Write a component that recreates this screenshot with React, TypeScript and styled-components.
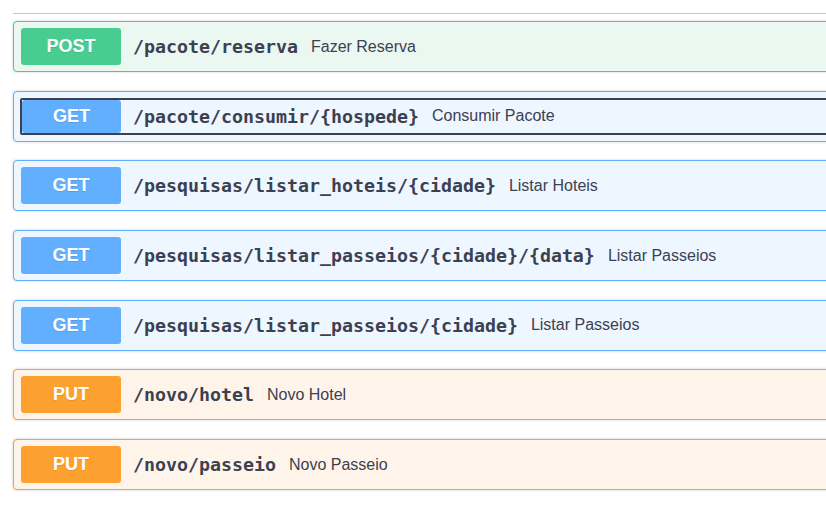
import styled, { createGlobalStyle } from "styled-components";

type Method = "post" | "get" | "put";

const colors: Record<Method, { main: string; bg: string }> = {
  post: { main: "#49cc90", bg: "#ebf7f1" },
  get: { main: "#61affe", bg: "#eef6ff" },
  put: { main: "#fca130", bg: "#fff4ea" },
};

const operations: {
  method: Method;
  path: string;
  summary: string;
  focused?: boolean;
}[] = [
  { method: "post", path: "/pacote/reserva", summary: "Fazer Reserva" },
  {
    method: "get",
    path: "/pacote/consumir/{hospede}",
    summary: "Consumir Pacote",
    focused: true,
  },
  {
    method: "get",
    path: "/pesquisas/listar_hoteis/{cidade}",
    summary: "Listar Hoteis",
  },
  {
    method: "get",
    path: "/pesquisas/listar_passeios/{cidade}/{data}",
    summary: "Listar Passeios",
  },
  {
    method: "get",
    path: "/pesquisas/listar_passeios/{cidade}",
    summary: "Listar Passeios",
  },
  { method: "put", path: "/novo/hotel", summary: "Novo Hotel" },
  { method: "put", path: "/novo/passeio", summary: "Novo Passeio" },
];

function App() {
  return (
    <>
      <GlobalStyle />
      <Page>
        <TagSection>
          <Divider />
          {operations.map((op) => (
            <OpBlock key={op.method + op.path} $method={op.method}>
              <SummaryControl $focused={op.focused}>
                <MethodBadge $method={op.method} $focused={op.focused}>
                  {op.method.toUpperCase()}
                </MethodBadge>
                <PathText>{op.path}</PathText>
                <Description>{op.summary}</Description>
              </SummaryControl>
            </OpBlock>
          ))}
        </TagSection>
      </Page>
    </>
  );
}

export default App;

const GlobalStyle = createGlobalStyle`
  html, body {
    margin: 0;
    padding: 0;
    background: #ffffff;
    overflow: hidden;
  }
`;

const Page = styled.div`
  width: 826px;
  height: 516px;
  overflow: hidden;
  padding: 13px 0 0 13px;
  box-sizing: border-box;
`;

const TagSection = styled.div`
  width: 900px;
  display: flex;
  flex-direction: column;
`;

const Divider = styled.div`
  height: 1px;
  background: rgba(59, 65, 81, 0.3);
  margin-bottom: 7px;
`;

const OpBlock = styled.div<{ $method: Method }>`
  border: 1px solid ${(p) => colors[p.$method].main};
  background: ${(p) => colors[p.$method].bg};
  border-radius: 4px;
  box-shadow: 0 0 3px rgba(0, 0, 0, 0.19);
  padding: 6px 6px;
  margin-bottom: 18.7px;
  height: 51px;
  box-sizing: border-box;
`;

const SummaryControl = styled.div<{ $focused?: boolean }>`
  display: flex;
  align-items: stretch;
  height: 37px;
  box-sizing: border-box;
  padding-left: ${(p) => (p.$focused ? "0" : "1px")};
  border: ${(p) => (p.$focused ? "2px solid #3b4151" : "none")};
  border-radius: ${(p) => (p.$focused ? "2px" : "0")};
`;

const MethodBadge = styled.div<{ $method: Method; $focused?: boolean }>`
  width: ${(p) => (p.$focused ? "99px" : "100px")};
  flex-shrink: 0;
  display: flex;
  align-items: center;
  justify-content: center;
  background: ${(p) => colors[p.$method].main};
  color: #ffffff;
  border-radius: 3px;
  font-family: "Liberation Sans", Arial, sans-serif;
  font-weight: 700;
  font-size: 18px;
  text-shadow: 0 1px 0 rgba(0, 0, 0, 0.1);
`;

const PathText = styled.span`
  display: flex;
  align-items: center;
  padding-left: 12px;
  font-family: "DejaVu Sans Mono", monospace;
  font-weight: 700;
  font-size: 18.27px;
  color: #3b4151;
  white-space: nowrap;
`;

const Description = styled.span`
  display: flex;
  align-items: center;
  padding-left: 13px;
  font-family: "Liberation Sans", Arial, sans-serif;
  font-size: 16px;
  color: #3b4151;
  white-space: nowrap;
`;
